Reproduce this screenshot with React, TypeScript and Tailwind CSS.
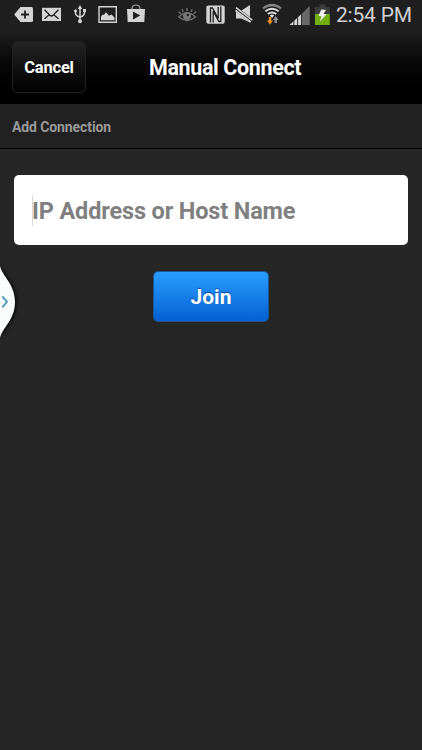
import type { ReactNode } from "react";

function Icon({ x, w, className = "", children }: { x: number; w: number; className?: string; children: ReactNode }) {
  return (
    <svg width={w} height={30} viewBox={`${x} 0 ${w} 30`} fill="none" className={`block shrink-0 ${className}`} aria-hidden="true">
      {children}
    </svg>
  );
}

function StatusBar() {
  return (
    <div className="flex h-[30px] shrink-0 items-center bg-[#1f1f1f] pl-3.5">
      <Icon x={14} w={20}>
        <path d="M20.5 7H31.5Q33 7 33 8.5V20.5Q33 22 31.5 22H20.5L14.2 14.5Z" fill="#d4d4d4" />
        <path d="M25 10.5V18.5M21 14.5H29" stroke="#1f1f1f" strokeWidth="1.8" />
      </Icon>
      <Icon x={42} w={20} className="ml-2">
        <path d="M42 7.8H61V21H42Z" fill="#d4d4d4" />
        <path d="M44.5 9.8L50 15.3Q51.5 16.7 53 15.3L58.5 9.8M44.5 18.8L49 15M58.5 18.8L54 15" stroke="#1f1f1f" strokeWidth="1.3" />
      </Icon>
      <Icon x={73} w={14} className="ml-[11px]">
        <path d="M80 8V21M75.5 10.5V13.2Q75.5 15.5 80 17.3M84.5 10V12.8Q84.5 15.5 80 17.3" stroke="#d4d4d4" strokeWidth="1.5" />
        <path d="M80 5L82.3 9H77.7ZM83 9H86V12H83Z" fill="#d4d4d4" />
        <circle cx="75.5" cy="10.8" r="1.5" fill="#d4d4d4" />
        <circle cx="80" cy="21.3" r="2" fill="#d4d4d4" />
      </Icon>
      <Icon x={98} w={20} className="ml-[11px]">
        <path d="M99 6.8H116.3V22.2H99Z" stroke="#d4d4d4" strokeWidth="1.4" />
        <path d="M101 20.3V16.5L102.5 14.8H104L106 12.2L109 15.8L111.5 14.5L114.5 17.5V20.3Z" fill="#d4d4d4" />
      </Icon>
      <Icon x={126} w={20} className="ml-2">
        <path d="M132 9V8Q132.5 5 136 5T140 8V9" stroke="#a5a5a5" strokeWidth="1.2" />
        <path d="M127 9H145L144.3 22H127.7Z" fill="#d4d4d4" />
        <path d="M133 11.5L140.3 15.5L133 19.5Z" fill="#1f1f1f" />
      </Icon>
      <Icon x={177} w={20} className="ml-[31px]">
        <path d="M178.8 17Q187 9 195.5 17Q187 24 178.8 17Z" stroke="#717171" strokeWidth="1.5" />
        <circle cx="187" cy="16" r="4" fill="#777777" />
        <circle cx="187.8" cy="15" r="1.2" fill="#1f1f1f" />
        <path d="M187 8V11M182 9.3L183.3 11.8M192.2 9.3L191 11.8M178.5 11.8L181 13.8M196 11.8L193.5 13.8" stroke="#717171" strokeWidth="1.4" />
      </Icon>
      <Icon x={206} w={19} className="ml-[9px]">
        <rect x="206.3" y="5.5" width="18.4" height="18.3" rx="2" fill="#d4d4d4" />
        <path d="M210.5 22.5V8H212.5L218.2 18.5V7M220.8 6.5V21.5H218.8L213.2 11V22.5" stroke="#1f1f1f" strokeWidth="1.3" />
      </Icon>
      <Icon x={234} w={20} className="ml-[9px]">
        <path d="M236 10.5H241.5L250 5V22.5L241.5 18.5H236Z" fill="#d4d4d4" />
        <path d="M235 8.2L252 21.2" stroke="#1f1f1f" strokeWidth="4.4" />
        <path d="M236 7.7L252.3 20.1M235.5 10.5L250.7 22" stroke="#d4d4d4" strokeWidth="1.6" />
      </Icon>
      <Icon x={262} w={20} className="ml-2">
        <path d="M263 8.5Q272 1.5 281 8.5" stroke="#858585" strokeWidth="2.2" />
        <path d="M265.3 11.3Q272 6 278.7 11.3M267.8 14.1Q272 10.7 276.2 14.1" stroke="#dcdcdc" strokeWidth="1.9" />
        <path d="M269.8 15.5Q272 13.7 274.2 15.5L272 18Z" fill="#dcdcdc" />
        <path d="M268.8 17H271.2V20.5H273L270 24.8L267 20.5H268.8Z" fill="#e89322" />
        <path d="M275.7 16L278.7 20H277V23H274.5V20H272.8Z" fill="#909090" />
      </Icon>
      <Icon x={289} w={21} className="ml-[7px]">
        <path d="M289.5 25L302 13.5V25Z" fill="#d4d4d4" />
        <path d="M302 13.5L309.7 6V25H302Z" fill="#686868" />
        <path d="M293.8 15V25M297.6 13V25M301.5 10V25" stroke="#1f1f1f" strokeWidth="0.9" />
      </Icon>
      <Icon x={315} w={15} className="ml-[5px]">
        <path d="M319.5 4.5H325.5V7H329.8V14H315V7H319.5Z" fill="#3c3c3c" />
        <path d="M315 14H329.8V25H315Z" fill="#72ad12" />
        <path d="M321.3 9.5L326 10L323.5 13.8L326.5 14.5L319.7 21.5L321.5 16.3L318.5 15.8Z" fill="#f3f3f3" />
      </Icon>
      <span className="ml-1.5 whitespace-nowrap text-[21px] leading-[30px] tracking-[-0.2px] text-[#d0d0d0]">2:54 PM</span>
    </div>
  );
}

function Header() {
  return (
    <header className="flex h-[74px] shrink-0 items-start bg-linear-to-b from-[#1f1f1f] to-black pl-3 pt-[11px]">
      <button className="h-[52px] w-[74px] rounded-[5px] border border-[#202020] bg-linear-to-b from-[#242424] to-[#030303] pt-0.5 text-[16.5px] font-bold tracking-[-0.2px] text-white">
        Cancel
      </button>
      <h1 className="ml-[63px] mt-[13px] whitespace-nowrap text-[21.5px] font-bold leading-7 tracking-[-0.37px] text-white">Manual Connect</h1>
    </header>
  );
}

function SideHandle() {
  return (
    <svg className="absolute left-0 top-[258px]" width="24" height="92" viewBox="0 258 24 92" fill="none" aria-hidden="true">
      <path d="M0 266C2 276 15 284 15 302S2 328 0 338Z" fill="#fbfdfd" className="drop-shadow-[1px_0_2px_#000]" />
      <path d="M2.3 296.5L7 301.8L2.3 307.3" stroke="#569bbb" strokeWidth="1.9" />
    </svg>
  );
}

export default function App() {
  return (
    <main className="relative flex h-[750px] w-[422px] flex-col overflow-hidden bg-[#262626] font-['Roboto',sans-serif]">
      <StatusBar />
      <Header />
      <h2 className="h-[45px] shrink-0 border-b border-black bg-[#212121] pl-3 text-[14px] font-bold leading-[46px] tracking-[-0.1px] text-[#999999]">Add Connection</h2>
      <section className="flex flex-col items-center px-3.5 pt-[26px]">
        <div className="flex h-[70px] w-full items-center rounded-[5px] bg-white pl-[18px]">
          <div className="h-[31px] w-px bg-[#d9d9d9]" />
          <span className="-ml-px whitespace-nowrap pt-0.5 text-[23.5px] font-bold leading-[30px] tracking-[-0.15px] text-[#808080]">IP Address or Host Name</span>
        </div>
        <button className="mt-[26px] h-[51px] w-[116px] rounded-[5px] border border-[#1d568f] bg-linear-to-b from-[#2a9dff] to-[#0560d3] pt-[3px] text-[21px] font-bold text-white [text-shadow:0_-1px_1px_#07499c]">
          Join
        </button>
      </section>
      <SideHandle />
    </main>
  );
}
